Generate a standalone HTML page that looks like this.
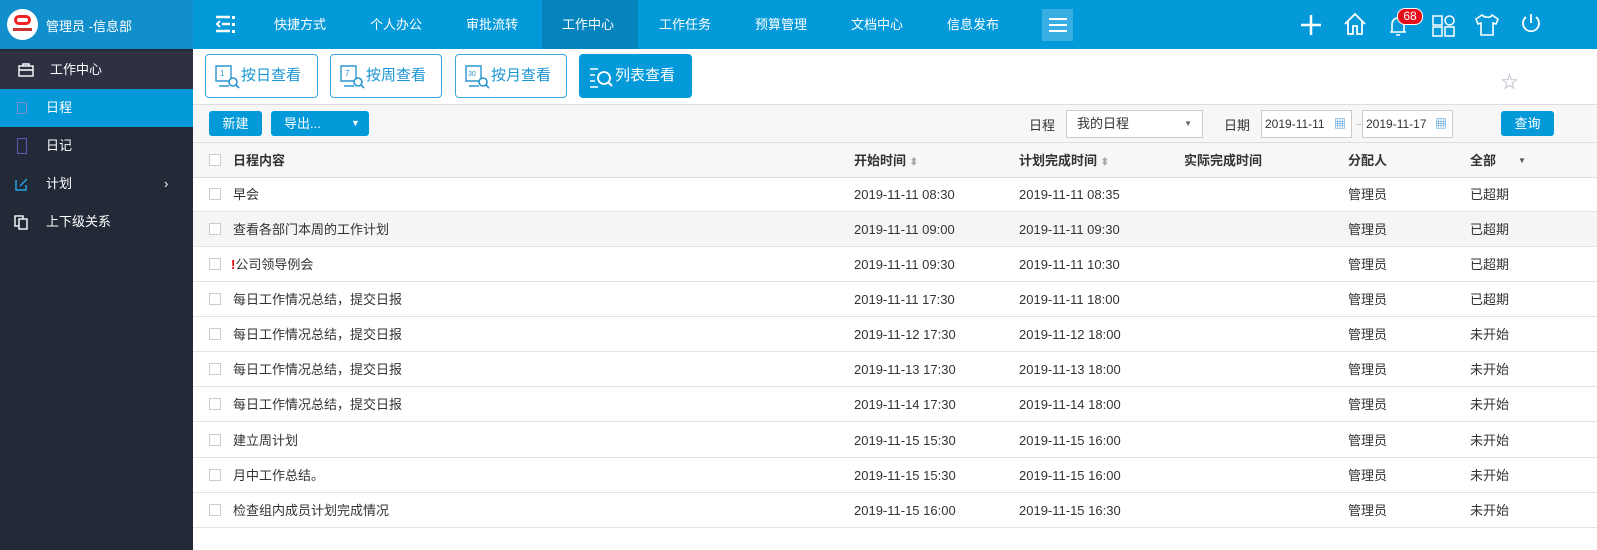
<!DOCTYPE html><html><head><meta charset="utf-8"><style>
*{margin:0;padding:0;box-sizing:border-box}
body{width:1597px;height:550px;overflow:hidden;font-family:"Liberation Sans","Noto Sans CJK SC",sans-serif;font-size:13px;color:#333;background:#fff;position:relative}
.abs{position:absolute}
#top{left:0;top:0;width:1597px;height:49px;background:#049ad9}
#brand{left:0;top:0;width:193px;height:49px;background:#118fcd;color:#fff;font-size:13px}
#side{left:0;top:49px;width:193px;height:501px;background:#222a37;color:#fff}
.si{position:absolute;left:0;width:193px;height:38px;line-height:38px;font-size:13px}
.nav{position:absolute;top:0;height:49px;line-height:49px;color:#fff;font-size:13px}
.vb{position:absolute;top:54px;height:44px;border:1px solid #3aa5dc;border-radius:4px;color:#1b95d2;font-size:15px;line-height:42px;background:#fff}
.vb svg{position:absolute;left:9px;top:10px}
.btn{position:absolute;background:#049ad9;color:#fff;border-radius:3px;font-size:13px;text-align:center}
.row{position:absolute;left:193px;width:1404px;height:35px;line-height:35px;border-bottom:1px solid #e3e3e3;font-size:13px;color:#333}
.row span{position:absolute}
.cb{position:absolute;left:16px;top:11px;width:12px;height:12px;border:1px solid #ccc;background:#fff}
.inp{position:absolute;border:1px solid #ccc;background:#fff;font-size:12px;color:#333}
</style></head><body>
<div id="top" class="abs"></div>
<div id="brand" class="abs">
<div class="abs" style="left:7px;top:9px;width:31px;height:31px;border-radius:50%;background:#fff"><div class="abs" style="left:7px;top:6px;width:17px;height:10px;border:3px solid #e22;border-radius:6px"></div><div class="abs" style="left:6px;top:19px;width:19px;height:3px;background:#c33"></div></div>
<div class="abs" style="left:46px;top:16px">管理员 -信息部</div></div>
<svg class="abs" style="left:214px;top:14px" width="22" height="20"><g stroke="#fff" stroke-width="2.5" fill="none"><path d="M2 3h14M8 10h8M2 17h14"/><path d="M6 7l-3 3 3 3" stroke-width="2"/></g><g fill="#fff"><rect x="18" y="2" width="3" height="3"/><rect x="18" y="9" width="3" height="3"/><rect x="18" y="16" width="3" height="3"/></g></svg>
<div class="abs" style="left:542px;top:0;width:96px;height:49px;background:#0483bc"></div>
<div class="nav" style="left:274px">快捷方式</div><div class="nav" style="left:370px">个人办公</div><div class="nav" style="left:466px">审批流转</div><div class="nav" style="left:562px">工作中心</div><div class="nav" style="left:659px">工作任务</div><div class="nav" style="left:755px">预算管理</div><div class="nav" style="left:851px">文档中心</div><div class="nav" style="left:947px">信息发布</div>
<div class="abs" style="left:1042px;top:9px;width:31px;height:32px;background:#38aee2"></div>
<svg class="abs" style="left:1049px;top:17px" width="18" height="16"><path d="M0 2h18M0 8h18M0 14h18" stroke="#fff" stroke-width="2"/></svg>
<svg class="abs" style="left:1299px;top:13px" width="24" height="24"><path d="M12 2v20M2 12h20" stroke="#fff" stroke-width="2.5"/></svg>
<svg class="abs" style="left:1343px;top:11px" width="24" height="26"><path d="M2 13L12 3l10 10M5 10v13h5v-8h4v8h5V10" stroke="#fff" stroke-width="1.8" fill="none"/></svg>
<svg class="abs" style="left:1386px;top:12px" width="24" height="26"><path d="M4 20h16M6 20V12a6 6 0 0112 0v8M10 23h4" stroke="#fff" stroke-width="1.6" fill="none"/></svg>
<div class="abs" style="left:1397px;top:8px;width:26px;height:17px;background:#e50d1a;border:1.5px solid #fff;border-radius:8px;color:#fff;font-size:12px;line-height:14px;text-align:center">68</div>
<svg class="abs" style="left:1432px;top:15px" width="24" height="22"><g stroke="#fff" stroke-width="1.5" fill="none"><rect x="1" y="1" width="9" height="9"/><circle cx="17.5" cy="5.5" r="4.5"/><rect x="1" y="12" width="9" height="9"/><rect x="13" y="12" width="9" height="9"/></g></svg>
<svg class="abs" style="left:1474px;top:13px" width="26" height="24"><path d="M8 2L2 6l2 5 3-1v12h12V10l3 1 2-5-6-4c-1 3-7 3-10 0z" stroke="#fff" stroke-width="1.6" fill="none"/></svg>
<svg class="abs" style="left:1519px;top:12px" width="24" height="24"><path d="M12 2v9M7 5a8 8 0 1010 0" stroke="#fff" stroke-width="1.8" fill="none"/></svg>

<div id="side" class="abs">
<div class="si" style="top:2px;background:#2d3142"><svg class="abs" style="left:18px;top:12px" width="16" height="14"><rect x="1" y="3" width="14" height="10" stroke="#fff" stroke-width="1.4" fill="none"/><path d="M5 3V1h6v2M1 7h14" stroke="#fff" stroke-width="1.4" fill="none"/></svg><span class="abs" style="left:50px">工作中心</span></div>
<div class="si" style="top:40px;background:#049ad9"><div class="abs" style="left:17px;top:13px;width:10px;height:12px;border:1px solid #7a8fd0"></div><span class="abs" style="left:46px">日程</span></div>
<div class="si" style="top:78px"><div class="abs" style="left:17px;top:11px;width:10px;height:16px;border:1px solid #5a5ab8"></div><span class="abs" style="left:46px">日记</span></div>
<div class="si" style="top:116px"><svg class="abs" style="left:15px;top:12px" width="14" height="14"><path d="M1 3v10h10V8M5 9l7-7" stroke="#29a0e0" stroke-width="1.5" fill="none"/></svg><span class="abs" style="left:46px">计划</span><span class="abs" style="left:164px">›</span></div>
<div class="si" style="top:154px"><svg class="abs" style="left:14px;top:12px" width="14" height="15"><rect x="1" y="1" width="8" height="10" stroke="#fff" stroke-width="1.4" fill="none"/><rect x="5" y="4" width="8" height="10" stroke="#fff" stroke-width="1.4" fill="#222a37"/></svg><span class="abs" style="left:46px">上下级关系</span></div>
</div>

<div class="vb" style="left:205px;width:113px"><svg width="26" height="24"><path d="M1 1h15v15H1zM4 21h10" stroke="#2a95d0" stroke-width="1.4" fill="none"/><circle cx="18" cy="17" r="4" stroke="#2a95d0" stroke-width="1.6" fill="#fff"/><path d="M21 20l3 3" stroke="#2a95d0" stroke-width="1.6"/><text x="5" y="11" font-size="8" fill="#2a95d0">1</text></svg><span style="position:absolute;left:35px">按日查看</span></div>
<div class="vb" style="left:330px;width:112px"><svg width="26" height="24"><path d="M1 1h15v15H1zM4 21h10" stroke="#2a95d0" stroke-width="1.4" fill="none"/><circle cx="18" cy="17" r="4" stroke="#2a95d0" stroke-width="1.6" fill="#fff"/><path d="M21 20l3 3" stroke="#2a95d0" stroke-width="1.6"/><text x="5" y="11" font-size="8" fill="#2a95d0">7</text></svg><span style="position:absolute;left:35px">按周查看</span></div>
<div class="vb" style="left:455px;width:112px"><svg width="26" height="24"><path d="M1 1h15v15H1zM4 21h10" stroke="#2a95d0" stroke-width="1.4" fill="none"/><circle cx="18" cy="17" r="4" stroke="#2a95d0" stroke-width="1.6" fill="#fff"/><path d="M21 20l3 3" stroke="#2a95d0" stroke-width="1.6"/><text x="3" y="11" font-size="7" fill="#2a95d0">30</text></svg><span style="position:absolute;left:35px">按月查看</span></div>
<div class="vb" style="left:579px;width:113px;background:#049ad9;border-color:#049ad9;color:#fff"><svg width="26" height="24" style="top:11px"><path d="M1 3h8M1 9h5M1 15h5M1 21h8" stroke="#fff" stroke-width="1.6"/><circle cx="15" cy="12" r="6" stroke="#fff" stroke-width="1.8" fill="none"/><path d="M19 16l4 4" stroke="#fff" stroke-width="2"/></svg><span style="position:absolute;left:35px">列表查看</span></div>
<span class="abs" style="left:1501px;top:68px;color:#aab;font-size:17px">☆</span>

<div class="abs" style="left:193px;top:104px;width:1404px;height:1px;background:#ddd"></div>
<div class="abs" style="left:193px;top:105px;width:1404px;height:38px;background:#f7f7f7;border-bottom:1px solid #ddd"></div>
<div class="btn" style="left:209px;top:111px;width:53px;height:25px;line-height:25px">新建</div>
<div class="btn" style="left:271px;top:111px;width:98px;height:25px;line-height:25px;text-align:left;padding-left:13px">导出...<span style="position:absolute;left:80px;font-size:9px">▼</span></div>
<span class="abs" style="left:1029px;top:115px">日程</span>
<div class="inp" style="left:1066px;top:110px;width:137px;height:28px;line-height:26px;padding-left:10px;font-size:13px">我的日程<span style="position:absolute;right:10px;font-size:8px;color:#666">▼</span></div>
<span class="abs" style="left:1224px;top:115px">日期</span>
<div class="inp" style="left:1261px;top:110px;width:91px;height:28px;line-height:26px;padding-left:3px">2019-11-11<span style="position:absolute;right:5px;color:#3a8fd0">▦</span></div>
<div class="abs" style="left:1356px;top:124px;width:28px;height:1px;background:#ccc"></div>
<div class="inp" style="left:1362px;top:110px;width:91px;height:28px;line-height:26px;padding-left:3px">2019-11-17<span style="position:absolute;right:5px;color:#3a8fd0">▦</span></div>
<div class="btn" style="left:1501px;top:111px;width:53px;height:25px;line-height:25px">查询</div>

<div class="row" style="top:143px;background:#f7f7f7;font-weight:bold;border-bottom:1px solid #ddd"><div class="cb"></div><span style="left:40px">日程内容</span><span style="left:661px">开始时间 <b style="color:#aaa;font-size:10px">⬍</b></span><span style="left:826px">计划完成时间 <b style="color:#aaa;font-size:10px">⬍</b></span><span style="left:991px">实际完成时间</span><span style="left:1155px">分配人</span><span style="left:1277px">全部</span><span style="left:1325px;font-size:8px;color:#555">▼</span></div>

<div class="row" style="top:177px"><div class="cb"></div><span style="left:40px">早会</span><span style="left:661px">2019-11-11 08:30</span><span style="left:826px">2019-11-11 08:35</span><span style="left:1155px">管理员</span><span style="left:1277px">已超期</span></div>
<div class="row" style="top:212px;background:#f5f5f5"><div class="cb"></div><span style="left:40px">查看各部门本周的工作计划</span><span style="left:661px">2019-11-11 09:00</span><span style="left:826px">2019-11-11 09:30</span><span style="left:1155px">管理员</span><span style="left:1277px">已超期</span></div>
<div class="row" style="top:247px"><div class="cb"></div><span style="left:38px"><b style="color:#e00">!</b>公司领导例会</span><span style="left:661px">2019-11-11 09:30</span><span style="left:826px">2019-11-11 10:30</span><span style="left:1155px">管理员</span><span style="left:1277px">已超期</span></div>
<div class="row" style="top:282px"><div class="cb"></div><span style="left:40px">每日工作情况总结，提交日报</span><span style="left:661px">2019-11-11 17:30</span><span style="left:826px">2019-11-11 18:00</span><span style="left:1155px">管理员</span><span style="left:1277px">已超期</span></div>
<div class="row" style="top:317px"><div class="cb"></div><span style="left:40px">每日工作情况总结，提交日报</span><span style="left:661px">2019-11-12 17:30</span><span style="left:826px">2019-11-12 18:00</span><span style="left:1155px">管理员</span><span style="left:1277px">未开始</span></div>
<div class="row" style="top:352px"><div class="cb"></div><span style="left:40px">每日工作情况总结，提交日报</span><span style="left:661px">2019-11-13 17:30</span><span style="left:826px">2019-11-13 18:00</span><span style="left:1155px">管理员</span><span style="left:1277px">未开始</span></div>
<div class="row" style="top:387px"><div class="cb"></div><span style="left:40px">每日工作情况总结，提交日报</span><span style="left:661px">2019-11-14 17:30</span><span style="left:826px">2019-11-14 18:00</span><span style="left:1155px">管理员</span><span style="left:1277px">未开始</span></div>
<div class="row" style="top:423px"><div class="cb"></div><span style="left:40px">建立周计划</span><span style="left:661px">2019-11-15 15:30</span><span style="left:826px">2019-11-15 16:00</span><span style="left:1155px">管理员</span><span style="left:1277px">未开始</span></div>
<div class="row" style="top:458px"><div class="cb"></div><span style="left:40px">月中工作总结。</span><span style="left:661px">2019-11-15 15:30</span><span style="left:826px">2019-11-15 16:00</span><span style="left:1155px">管理员</span><span style="left:1277px">未开始</span></div>
<div class="row" style="top:493px"><div class="cb"></div><span style="left:40px">检查组内成员计划完成情况</span><span style="left:661px">2019-11-15 16:00</span><span style="left:826px">2019-11-15 16:30</span><span style="left:1155px">管理员</span><span style="left:1277px">未开始</span></div>
</body></html>
